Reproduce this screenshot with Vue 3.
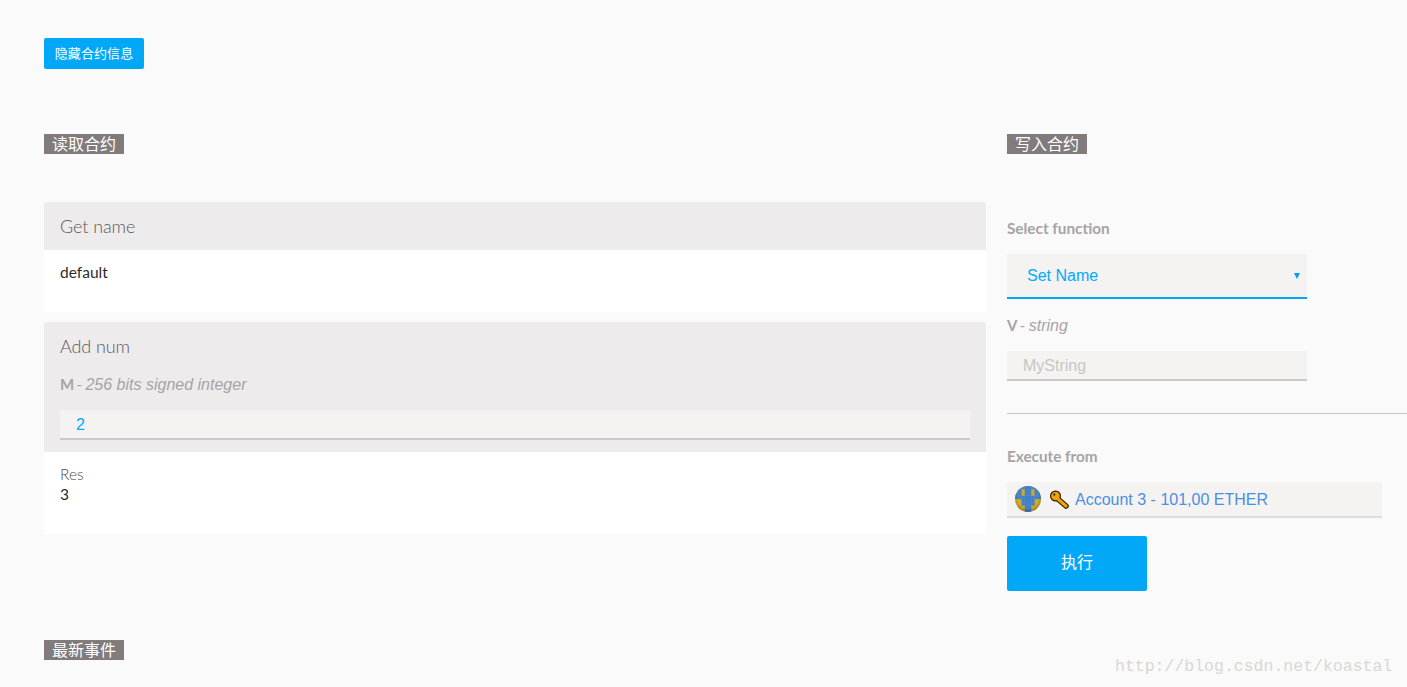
<template>
  <div class="page">
    <button class="toggle-btn">隐藏合约信息</button>

    <div class="contract-grid">
      <section class="read-col">
        <h3 class="dapp-tag">读取合约</h3>

        <div class="query-list">
          <div class="query-card">
            <div class="query-head">
              <div class="query-title">Get name</div>
            </div>
            <div class="query-body query-body-short">
              <div class="query-value">default</div>
            </div>
          </div>

          <div class="query-card">
            <div class="query-head">
              <div class="query-title">Add num</div>
              <div class="param-label"><b>M</b> - <em>256 bits signed integer</em></div>
              <div class="text-input"><span class="input-value">2</span></div>
            </div>
            <div class="query-body">
              <div class="result-label">Res</div>
              <div class="query-value">3</div>
            </div>
          </div>
        </div>
      </section>

      <section class="write-col">
        <h3 class="dapp-tag">写入合约</h3>

        <div class="field-title select-title">Select function</div>
        <div class="select-box">
          <span>Set Name</span>
          <i class="select-caret"></i>
        </div>

        <div class="param-label write-param"><b>V</b> - <em>string</em></div>
        <div class="text-input write-input"><span class="input-placeholder">MyString</span></div>

        <hr class="divider" />

        <div class="field-title">Execute from</div>
        <div class="account-box">
          <svg class="identicon" viewBox="0 0 8 8" width="26" height="26">
            <defs>
              <clipPath id="identicon-clip"><circle cx="4" cy="4" r="4" /></clipPath>
              <radialGradient id="identicon-shade" cx="50%" cy="42%" r="55%">
                <stop offset="75%" stop-color="#000" stop-opacity="0" />
                <stop offset="100%" stop-color="#000" stop-opacity="0.2" />
              </radialGradient>
            </defs>
            <g clip-path="url(#identicon-clip)">
              <rect width="8" height="8" fill="#d0aa2c" />
              <rect
                v-for="(cell, i) in identiconCells"
                :key="i"
                :x="cell[0]"
                :y="cell[1]"
                width="1.02"
                height="1.02"
                fill="#3f7fd0"
              />
              <rect width="8" height="8" fill="url(#identicon-shade)" />
            </g>
          </svg>
          <svg class="key-icon" viewBox="0 0 20 20" width="20" height="20">
            <path d="M6 7.500L17 17" stroke="#2b1d00" stroke-width="5.600" stroke-linecap="round" />
            <circle cx="6.500" cy="7" r="5.500" fill="#2b1d00" />
            <circle cx="6.500" cy="7" r="4.300" fill="#f0a30a" />
            <path d="M6 7.500L17 17" stroke="#f0a30a" stroke-width="3.200" stroke-linecap="round" />
            <circle cx="5.300" cy="5.600" r="1.100" fill="#2b1d00" />
          </svg>
          <span class="account-name">Account 3 - 101,00 ETHER</span>
        </div>

        <button class="execute-btn">执行</button>
      </section>
    </div>

    <h3 class="dapp-tag events-tag">最新事件</h3>

    <div class="watermark">http://blog.csdn.net/koastal</div>
  </div>
</template>

<script setup>
// blue squares of the account identicon, mirrored around the middle column
const leftHalf = [
  [0, 0], [1, 0], [2, 0], [3, 0],
  [0, 1], [1, 1], [3, 1],
  [0, 2], [1, 2], [3, 2],
  [0, 3], [1, 3], [2, 3], [3, 3],
  [2, 4], [3, 4],
  [2, 5], [3, 5],
  [3, 6],
  [3, 7]
]
const identiconCells = leftHalf.flatMap(([x, y]) => [[x, y], [7 - x, y]])
</script>

<style>
html,
body {
  background: #fafafa;
}
</style>

<style scoped>
.page {
  position: relative;
  height: 687px;
  box-sizing: border-box;
  padding: 38px 0 0 44px;
  overflow: hidden;
  font-family: Lato, "Noto Sans CJK SC", sans-serif;
}

.toggle-btn {
  display: block;
  width: 100px;
  height: 31px;
  padding: 0 0 2px;
  border: 0;
  border-radius: 2px;
  background: #02a8f8;
  color: #fff;
  font-family: "Noto Sans CJK SC", sans-serif;
  font-size: 13px;
  font-weight: 400;
  letter-spacing: 0.1px;
}

.contract-grid {
  display: grid;
  grid-template-columns: 942px 400px;
  column-gap: 21px;
  margin-top: 65px;
}

.dapp-tag {
  width: 80px;
  height: 20px;
  margin: 0;
  background: #827b7b;
  color: #fff;
  font-family: "Noto Sans CJK SC", sans-serif;
  font-size: 16px;
  font-weight: 400;
  line-height: 18px;
  text-align: center;
}

.query-list {
  display: flex;
  flex-direction: column;
  gap: 10px;
  margin-top: 48px;
}

.query-card {
  background: #fff;
}

.query-head {
  padding: 12px 16px 12px;
  background: #edebec;
  border-radius: 2px 2px 0 0;
}

.query-title {
  height: 24px;
  color: #5e5757;
  font-size: 18px;
  font-weight: 300;
  letter-spacing: -0.1px;
  line-height: 25px;
}

.query-body {
  height: 82px;
  box-sizing: border-box;
  padding: 12px 16px 0;
}

.query-body-short {
  height: 62px;
}

.query-value {
  color: #2b2b2b;
  font-size: 15.500px;
  line-height: 20px;
}

.result-label {
  color: #4f4b4b;
  font-size: 15.500px;
  font-weight: 300;
  line-height: 20px;
}

.param-label {
  margin-top: 16px;
  color: #a8a3a3;
  font-size: 15px;
  line-height: 20px;
}

.param-label b {
  margin-right: -1.500px;
  font-size: 15px;
  font-weight: 700;
}

.param-label em {
  margin-left: -0.500px;
  font-family: "Liberation Sans", sans-serif;
  font-size: 16px;
}

.text-input {
  height: 30px;
  box-sizing: border-box;
  margin-top: 15px;
  padding-left: 16px;
  background: #f4f3f1;
  border-bottom: 2px solid #cec8c8;
  font-family: "Liberation Sans", sans-serif;
  font-size: 16px;
  line-height: 29px;
}

.input-value {
  color: #00aaff;
}

.input-placeholder {
  color: #c9c5c5;
}

.select-title {
  margin-top: 64px;
}

.field-title {
  height: 20px;
  color: #a8a3a3;
  font-size: 15.300px;
  font-weight: 700;
  line-height: 20px;
}

.select-box {
  display: flex;
  align-items: center;
  justify-content: space-between;
  width: 300px;
  height: 45px;
  box-sizing: border-box;
  margin-top: 16px;
  padding: 0 7px 0 20px;
  background: #f4f3f1;
  border-bottom: 2px solid #00a8f4;
  color: #00aaff;
  font-family: "Liberation Sans", sans-serif;
  font-size: 16px;
}

.select-caret {
  width: 0;
  height: 0;
  border-top: 6px solid #00a0ea;
  border-left: 3px solid transparent;
  border-right: 3px solid transparent;
}

.write-param {
  margin-top: 16px;
}

.write-input {
  width: 300px;
  margin-top: 15px;
}

.divider {
  width: 400px;
  height: 1px;
  margin: 32px 0 32px;
  border: 0;
  background: #c9c6c6;
}

.account-box {
  display: flex;
  align-items: center;
  width: 375px;
  height: 36px;
  box-sizing: border-box;
  margin-top: 16px;
  padding-left: 8px;
  background: #f4f3f1;
  border-bottom: 2px solid #dfdcdb;
  font-family: "Liberation Sans", sans-serif;
  font-size: 16px;
}

.identicon {
  flex-shrink: 0;
}

.key-icon {
  flex-shrink: 0;
  margin-left: 8px;
}

.account-name {
  margin-left: 6px;
  padding-top: 2px;
  color: #4a90e2;
}

.execute-btn {
  display: block;
  width: 140px;
  height: 55px;
  margin-top: 18px;
  padding: 0 0 5px;
  border: 0;
  border-radius: 2px;
  background: #02a8f8;
  color: #fff;
  font-family: "Noto Sans CJK SC", sans-serif;
  font-size: 16px;
  font-weight: 400;
}

.events-tag {
  position: absolute;
  left: 44px;
  top: 640px;
}

.watermark {
  position: absolute;
  left: 1115px;
  top: 657px;
  color: #d9d7d2;
  font-family: "Liberation Mono", monospace;
  font-size: 16.500px;
  line-height: 20px;
  white-space: nowrap;
}
</style>
